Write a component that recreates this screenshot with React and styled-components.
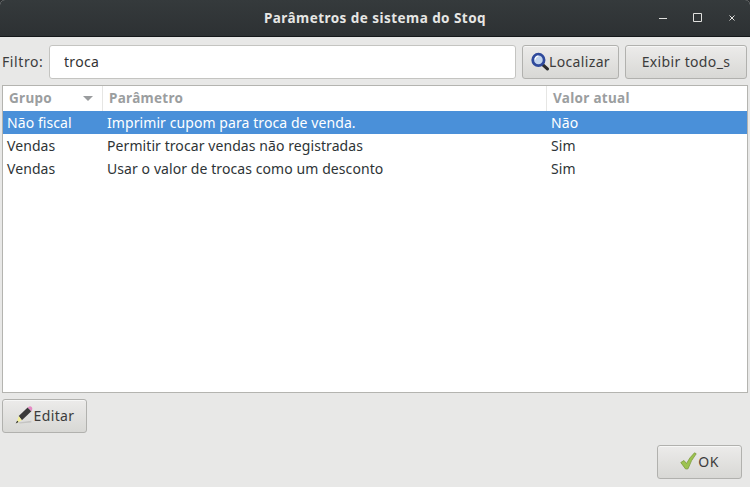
import React from 'react';
import styled, { createGlobalStyle } from 'styled-components';

const GlobalStyle = createGlobalStyle`
  html, body {
    margin: 0;
    padding: 0;
    background: #2c2f31;
  }
`;

const Window = styled.div`
  width: 750px;
  height: 487px;
  display: flex;
  flex-direction: column;
  background: #e8e8e7;
  border-radius: 5px 5px 0 0;
  overflow: hidden;
  font-family: "Noto Sans", "Open Sans", sans-serif;
  font-size: 14px;
  color: #3c3c3c;
`;

const TitleBar = styled.div`
  position: relative;
  height: 36px;
  flex: none;
  display: flex;
  align-items: center;
  justify-content: center;
  background: linear-gradient(#353a3c, #2d3133);
  border-bottom: 1px solid #15181a;
`;

const Title = styled.div`
  color: #e6e6e4;
  font-size: 13.5px;
  font-weight: 700;
  letter-spacing: 0.45px;
  margin-bottom: 1px;
`;

const WindowControls = styled.div`
  position: absolute;
  right: 12px;
  top: 12px;
  display: flex;
  gap: 22px;
`;

const ControlIcon = styled.svg`
  display: block;
  width: 12px;
  height: 12px;
  fill: none;
  stroke: #e0e0de;
`;

const Content = styled.div`
  flex: 1;
  display: flex;
  flex-direction: column;
  padding: 8px 2px 8px;
  min-height: 0;
`;

const FilterRow = styled.div`
  display: flex;
  align-items: stretch;
  height: 34px;
  margin-bottom: 6px;
  padding-right: 1px;
`;

const FilterLabel = styled.label`
  width: 47px;
  flex: none;
  align-self: center;
  margin-top: -2px;
  letter-spacing: 0.6px;
  color: #3c3c3c;
`;

const FilterInput = styled.input`
  flex: 1;
  min-width: 0;
  box-sizing: border-box;
  height: 34px;
  margin: 0 6px 0 0;
  padding: 0 14px 2px;
  border: 1px solid #c4c4c1;
  border-radius: 3px;
  background: #fff;
  outline: none;
  font: inherit;
  letter-spacing: 0.3px;
  color: #333;
`;

const Button = styled.button`
  box-sizing: border-box;
  display: flex;
  align-items: center;
  justify-content: center;
  gap: ${props => props.$iconGap || 0}px;
  width: ${props => props.$width}px;
  height: 34px;
  margin-left: ${props => props.$gap || 0}px;
  padding: 0 0 2px;
  border: 1px solid #b1b1ae;
  border-radius: 3px;
  background: linear-gradient(#ecebea, #d8d8d5);
  box-shadow: inset 0 1px 0 #f7f7f6;
  font: inherit;
  letter-spacing: 0.35px;
  color: #3c3c3c;
`;

const Tree = styled.div`
  flex: 1;
  min-height: 0;
  box-sizing: border-box;
  border: 1px solid #b4b4b0;
  background: #fff;
`;

const columns = '100px 444px 1fr';

const HeaderRow = styled.div`
  display: grid;
  grid-template-columns: ${columns};
  height: 25px;
`;

const HeaderCell = styled.div`
  display: flex;
  align-items: center;
  justify-content: space-between;
  padding: 0 ${props => props.$right || 0}px 2px ${props => props.$left}px;
  border-right: ${props => (props.$last ? 'none' : '1px solid #e6e6e4')};
  color: #9b9e9f;
  font-size: 13.5px;
  font-weight: 700;
  letter-spacing: 0.3px;
`;

const SortArrow = styled.span`
  width: 0;
  height: 0;
  margin-top: 2px;
  border-left: 5px solid transparent;
  border-right: 5px solid transparent;
  border-top: 5px solid #9a9c9e;
`;

const Row = styled.div`
  display: grid;
  grid-template-columns: ${columns};
  align-items: center;
  height: 23px;
  letter-spacing: 0.08px;
  background: ${props => (props.$selected ? '#4a90d9' : 'transparent')};
  color: ${props => (props.$selected ? '#fff' : '#2e3436')};
`;

const Cell = styled.div`
  padding-left: ${props => props.$left}px;
  white-space: nowrap;
`;

const EditRow = styled.div`
  display: flex;
  margin-top: 6px;
`;

const Footer = styled.div`
  display: flex;
  justify-content: flex-end;
  margin-top: 12px;
  padding-right: 6px;
`;

const rows = [
  { group: 'Não fiscal', name: 'Imprimir cupom para troca de venda.', value: 'Não', selected: true },
  { group: 'Vendas', name: 'Permitir trocar vendas não registradas', value: 'Sim' },
  { group: 'Vendas', name: 'Usar o valor de trocas como um desconto', value: 'Sim' },
];

const SearchIcon = () => (
  <svg width="18" height="19" viewBox="0 0 17 18">
    <path d="M10.5 11.5 L15.5 16" stroke="#2c2c2c" strokeWidth="3" strokeLinecap="round" />
    <circle cx="7" cy="7.5" r="5.4" fill="#c3d5ee" stroke="#2f4a9c" strokeWidth="2.6" />
    <path d="M4 7a3 3 0 0 1 3-3" fill="none" stroke="#fff" strokeWidth="1.2" />
  </svg>
);

const PencilIcon = () => (
  <svg width="19" height="18" viewBox="1 0 17 17">
    <path d="M4 15.5 L16 14 L16 15.5 L5 16.5 Z" fill="#c4c4c2" />
    <path d="M4 9.5 L12.5 1.5 L16 5 L7 13.5 Z" fill="#3a3a3a" />
    <path d="M12.5 1.5 L14 0.4 Q15.5 0 16.6 1.3 Q17.4 2.8 16.4 4.2 L16 5 Z" fill="#e58ac4" />
    <path d="M4 9.5 L7 13.5 L2 16 Z" fill="#f2ee9a" />
    <path d="M2.6 14 L3.8 15.2 L1.2 16.6 Z" fill="#222" />
  </svg>
);

const CheckIcon = () => (
  <svg width="17" height="18" viewBox="0 0 17 18">
    <path
      d="M0.8 10.5 L4 8.5 L6.5 11.5 Q9.5 5.5 14.5 0.8 L16.2 1.8 Q11 8 8 16.8 L5.6 17 Z"
      fill="#9cc34f"
      stroke="#7c9a3c"
      strokeWidth="0.8"
      strokeLinejoin="round"
    />
  </svg>
);

const App = () => (
  <Window>
    <GlobalStyle />
    <TitleBar>
      <Title>Parâmetros de sistema do Stoq</Title>
      <WindowControls>
        <ControlIcon viewBox="0 0 12 12">
          <path d="M1 6.5h8" strokeWidth="1" />
        </ControlIcon>
        <ControlIcon viewBox="0 0 12 12">
          <path d="M1.5 1.5h8v8h-8z" strokeWidth="1" />
        </ControlIcon>
        <ControlIcon viewBox="0 0 12 12">
          <path d="M3.5 3.5l5 5M8.5 3.5l-5 5" strokeWidth="1" />
        </ControlIcon>
      </WindowControls>
    </TitleBar>
    <Content>
      <FilterRow>
        <FilterLabel>Filtro:</FilterLabel>
        <FilterInput defaultValue="troca" />
        <Button $width={97}>
          <SearchIcon />
          Localizar
        </Button>
        <Button $width={122} $gap={6}>Exibir todo_s</Button>
      </FilterRow>
      <Tree>
        <HeaderRow>
          <HeaderCell $left={6} $right={9}>
            Grupo
            <SortArrow />
          </HeaderCell>
          <HeaderCell $left={6}>Parâmetro</HeaderCell>
          <HeaderCell $left={6} $last>Valor atual</HeaderCell>
        </HeaderRow>
        {rows.map(row => (
          <Row key={row.name} $selected={row.selected}>
            <Cell $left={4}>{row.group}</Cell>
            <Cell $left={4}>{row.name}</Cell>
            <Cell $left={4}>{row.value}</Cell>
          </Row>
        ))}
      </Tree>
      <EditRow>
        <Button $width={85}>
          <PencilIcon />
          Editar
        </Button>
      </EditRow>
      <Footer>
        <Button $width={85} $iconGap={1}>
          <CheckIcon />
          OK
        </Button>
      </Footer>
    </Content>
  </Window>
);

export default App;
